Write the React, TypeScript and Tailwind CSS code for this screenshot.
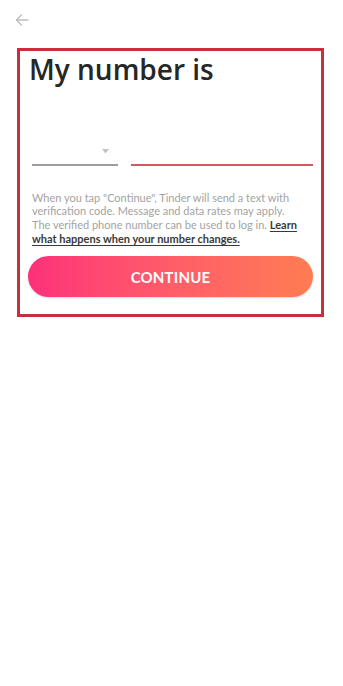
export default function App() {
  return (
    <div className="w-[343px] h-[686px] bg-white font-['Lato','Open_Sans',sans-serif]">
      {/* Top bar */}
      <div className="h-[48px] pl-[15px] pt-[14px]">
        <svg width="14" height="12" viewBox="0 0 14 12" fill="none" stroke="#bdbdbd" strokeWidth="1.3" strokeLinecap="round" strokeLinejoin="round">
          <path d="M13 6H1.5" />
          <path d="M6.5 1L1.5 6l5 5" />
        </svg>
      </div>

      {/* Highlighted form */}
      <div className="ml-[17px] w-[307px] h-[269px] border-[3px] border-[#c6303b] px-[8px]">
        <h1 className="pl-[1px] pt-0 font-['Open_Sans',sans-serif] text-[28px] leading-[36px] font-semibold text-[#262626] tracking-[0px]">
          My number is
        </h1>

        {/* Inputs */}
        <div className="mt-[62px] flex items-end pl-[4px]">
          <div className="w-[86px] flex flex-col items-end">
            <svg width="7" height="5" viewBox="0 0 7 5" className="mr-[9px] mb-[10px]">
              <path d="M0 0h7L3.5 4.5z" fill="#c4c4c4" />
            </svg>
            <div className="w-full h-[1.5px] bg-[#9e9e9e]" />
          </div>
          <div className="ml-[13px] flex-1 h-[1.5px] bg-[#d9545f]" />
        </div>

        {/* Disclaimer */}
        <p className="mt-[25px] pl-[4px] pr-[11px] text-[11px] leading-[13.7px] text-[#a3a3a3]">
          When you tap "Continue", Tinder will send a text with verification code. Message and data rates may apply. The verified phone number can be used to log in.{" "}
          <span className="font-bold text-[#3a3a3a] underline underline-offset-[1.5px]">
            Learn what happens when your number changes.
          </span>
        </p>

        {/* Button */}
        <button className="mt-[11px] w-full h-[41px] rounded-full bg-gradient-to-r from-[#fd2f79] to-[#ff7c52] text-white text-[15px] font-bold tracking-[0.2px] shadow-[0_1px_2px_rgba(0,0,0,0.15)]">
          CONTINUE
        </button>
      </div>
    </div>
  );
}
